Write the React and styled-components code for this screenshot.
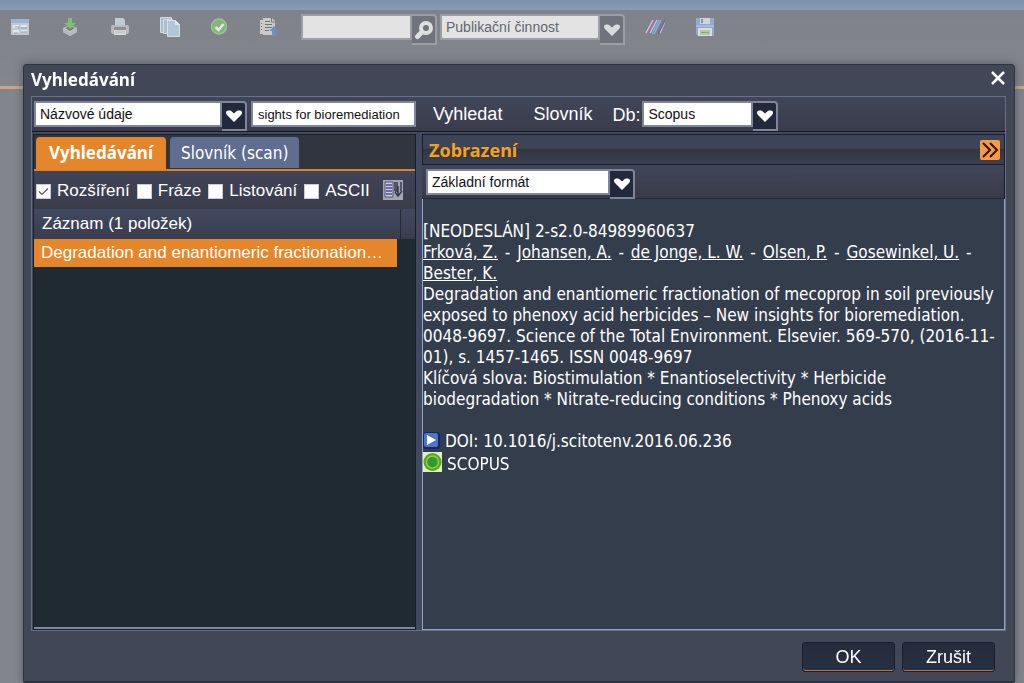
import {useState} from 'react'
import styled, {createGlobalStyle} from 'styled-components'

const GlobalStyle = createGlobalStyle`
  :root {
    --arial: "Liberation Sans", Arial, sans-serif;
    --tahoma: "DejaVu Sans Condensed", Tahoma, "Noto Sans", sans-serif;
    --bold: "Noto Sans", Tahoma, sans-serif;
    --fs-xs: 13px;
    --fs-sm: 14px;
    --fs-md: 17px;
    --fs-lg: 18px;
    --orange: #e5862a;
  }

  * {
    box-sizing: border-box;
  }

  body {
    margin: 0;
    overflow: hidden;
    background: #82868c;
    font-family: var(--arial);
    font-size: var(--fs-md);
    color: #fff;
  }

  button, input, select {
    font-family: inherit;
  }
`

const Page = styled.div`
  display: flex;
  flex-direction: column;
  min-height: 100vh;
`

const TopStrip = styled.div`
  height: 10px;
  background: linear-gradient(#7e90ab, #8a9bb3);
`

const MainToolbar = styled.header`
  display: flex;
  align-items: flex-start;
  height: 79px;
  padding: 4px 10px 0;
  background: linear-gradient(#80828b, #83868b);
  border-bottom: 3px solid #cfa47f;
`

const IconGroup = styled.div`
  display: flex;
  gap: 30px;
  padding-top: 3px;
  margin-right: ${p => p.$space || 0};
`

const IconButton = styled.button`
  width: 20px;
  height: 20px;
  padding: 0;
  border: 0;
  background: none;
  cursor: pointer;

  svg {
    display: block;
    width: 20px;
    height: 20px;
  }
`

const Combo = styled.div`
  position: relative;
  display: flex;
  align-items: flex-start;
  width: ${p => p.$width};
  margin-right: ${p => p.$space || 0};
`

const Select = styled.select`
  appearance: none;
  flex: 1;
  min-width: 0;
  height: 26px;
  margin: 0;
  padding: 0 4px;
  border: 2px solid ${p => p.$dim ? '#9c9ea5' : '#80859a'};
  border-radius: 0;
  background: ${p => p.$dim ? '#e3e3e3' : '#fff'};
  color: ${p => p.$dim ? '#63666b' : '#111'};
  font-size: var(--fs-sm);
`

const TextInput = styled.input`
  flex: 1;
  min-width: 0;
  height: 26px;
  margin: 0;
  padding: 0 5px;
  border: 2px solid ${p => p.$dim ? '#9c9ea5' : '#80859a'};
  border-radius: 0;
  background: ${p => p.$dim ? '#e3e3e3' : '#fff'};
  color: #111;
  font-size: var(--fs-xs);
`

const ArrowBox = styled.span`
  display: flex;
  align-items: center;
  justify-content: center;
  width: 25px;
  height: ${p => p.$height || '30px'};
  padding: 0;
  border: 2px solid ${p => p.$dim ? '#9c9ea5' : '#80859a'};
  border-left: 0;
  border-radius: 0 4px 0 0;
  background: ${p => p.$dim ? '#70737c' : '#22293c'};
  color: ${p => p.$dim ? '#d9dadd' : '#fff'};
  pointer-events: none;

  svg {
    flex: none;
  }
`

const SearchButton = styled(ArrowBox).attrs({as: 'button', type: 'button'})`
  pointer-events: auto;
  cursor: pointer;
`

/* modal window */
const Overlay = styled.div`
  position: fixed;
  inset: 0;
  display: flex;
  padding: 64px 9px 0 23px;
`

const Dialog = styled.section`
  display: flex;
  flex-direction: column;
  flex: 1;
  min-width: 0;
  padding: 0 8px 0 7px;
  border: 1px solid #2c3444;
  border-bottom-width: 2px;
  border-radius: 4px 4px 2px 2px;
  background: #414757;
  box-shadow: 0 0 8px rgba(40, 44, 54, .5);
`

const TitleBar = styled.div`
  display: flex;
  justify-content: space-between;
  align-items: flex-start;
  height: 31px;
`

const Title = styled.h1`
  margin: 0;
  font-family: var(--bold);
  font-size: var(--fs-md);
  line-height: 30px;
`

const CloseButton = styled.button`
  width: 16px;
  height: 28px;
  padding: 0;
  border: 0;
  background: none;
  color: #fff;
  cursor: pointer;
`

const Frame = styled.div`
  display: flex;
  flex-direction: column;
  flex: 1;
  min-height: 0;
  border: 1px solid #687086;
`

const SearchBar = styled.form`
  display: flex;
  align-items: flex-start;
  height: 35px;
  padding: 4px 2px 0;
  background: linear-gradient(#404659, #3a3c4b);
  border-bottom: 1px solid #15181f;
`

const BarButton = styled.button`
  height: 26px;
  margin-left: ${p => p.$space};
  padding: 0;
  border: 0;
  background: none;
  color: #fff;
  font-size: var(--fs-lg);
  cursor: pointer;
`

const BarLabel = styled.label`
  margin: 0 2px 0 20px;
  font-size: var(--fs-lg);
  line-height: 28px;
`

const Panels = styled.div`
  display: grid;
  grid-template-columns: 383px 1fr;
  gap: 6px;
  flex: 1;
  min-height: 0;
  padding: 2px 0 0 1px;
  background: #414860;
`

const LeftPanel = styled.div`
  display: flex;
  flex-direction: column;
  min-width: 0;
  border: 1px solid #191e29;
  background: #202a33;
`

const Tabs = styled.div`
  display: flex;
  align-items: flex-start;
  gap: 4px;
  height: 36px;
  padding: 2px 2px 0;
  background: #31353f;
  border-bottom: 2px solid #dc8127;
`

const Tab = styled.button`
  height: ${p => p.$active ? '33px' : '31px'};
  padding: ${p => p.$active ? '0 13px 3px' : '0 11px'};
  border: 0;
  border-radius: 4px 4px 0 0;
  background: ${p => p.$active ? 'var(--orange)' : '#5f6d8f'};
  color: #fff;
  font-family: ${p => p.$active ? 'var(--bold)' : 'var(--tahoma)'};
  font-size: var(--fs-md);
  font-weight: ${p => p.$active ? 'bold' : 'normal'};
  cursor: pointer;
`

const Options = styled.div`
  display: flex;
  align-items: center;
  gap: 7px;
  height: 38px;
  padding: 2px 2px 0;
  background: linear-gradient(#404459, #3a3c4a);
`

const Option = styled.label`
  display: flex;
  align-items: center;
  gap: 6px;
`

const Checkbox = styled.input.attrs({type: 'checkbox'})`
  appearance: none;
  width: 15px;
  height: 15px;
  margin: 1px 0 0;
  border: 1px solid #c9cbd2;
  background: #fff;

  &:checked {
    background: #fff url("data:image/svg+xml,%3Csvg xmlns='http://www.w3.org/2000/svg' viewBox='0 0 13 13'%3E%3Cpath d='M2 6.5 5 9.5 11 3.5' fill='none' stroke='%23555' stroke-width='1.2'/%3E%3C/svg%3E");
  }
`

const SortButton = styled(IconButton)`
  width: 21px;
  height: 20px;
  margin: 0 9px 2px auto;
`

const Results = styled.table`
  width: 100%;
  table-layout: fixed;
  border-collapse: collapse;

  th {
    height: 30px;
    padding: 0 8px;
    background: linear-gradient(#414a62, #3a3c4d);
    border-right: 1px solid #252a38;
    font-weight: normal;
    text-align: left;
  }

  th + th {
    width: 15px;
    padding: 0;
    border-right: 0;
  }

  td {
    padding: 0;
  }
`

const Record = styled.button`
  display: block;
  width: 363px;
  max-width: 100%;
  height: 28px;
  padding: 0 6px 0 7px;
  border: 0;
  background: var(--orange);
  color: #fff;
  font-size: var(--fs-md);
  text-align: left;
  white-space: nowrap;
  overflow: hidden;
  text-overflow: ellipsis;
`

const ListEnd = styled.div`
  margin-top: auto;
  border-bottom: 2px solid #8088a0;
`

const RightPanel = styled.div`
  display: flex;
  flex-direction: column;
  min-width: 0;
  min-height: 0;
`

const ViewHeader = styled.div`
  display: flex;
  align-items: center;
  justify-content: space-between;
  height: 31px;
  padding: 0 4px 0 6px;
  border: 1px solid #191e29;
  background: linear-gradient(#3d4458 0 45%, #32363f 50%, #3b4155);
`

const ViewTitle = styled.h2`
  margin: 0;
  color: #f4a11c;
  font-family: var(--bold);
  font-size: var(--fs-lg);
  line-height: 28px;
`

const ExpandButton = styled(IconButton)`
  border-radius: 2px;
  background: #f79a45;
`

const FormatBar = styled.div`
  height: 34px;
  padding: 4px 4px 0;
  border-right: 1px solid #191e29;
  border-bottom: 1px solid #22283a;
  background: linear-gradient(#404659, #3a3a49);
`

const Detail = styled.article`
  flex: 1;
  min-height: 0;
  padding: 22px 1px 0 0;
  border: 1px solid #93a5cb;
  border-top: 0;
  background: #343d4c;
  font-family: var(--tahoma);
  font-size: var(--fs-md);
  line-height: 21px;

  p {
    margin: 0;
  }

  a {
    color: #fff;
  }
`

const Dash = styled.span`
  padding: 0 2px;
`

const Source = styled.p`
  display: flex;
  align-items: flex-start;
  gap: 5px;
  line-height: ${p => p.$line};

  svg {
    flex: none;
  }
`

const Footer = styled.footer`
  display: flex;
  justify-content: flex-end;
  gap: 7px;
  padding: 11px 11px 9px;
`

const FooterButton = styled.button`
  width: 93px;
  height: 30px;
  padding: 0;
  border: 1px solid #191f2c;
  border-radius: 3px;
  background: linear-gradient(#242c3c, #272f42);
  box-shadow: inset 0 -1px 0 #b87840;
  color: #fff;
  font-size: var(--fs-lg);
  cursor: pointer;
`

const Arrow = () => (
  <svg width="18" height="14" viewBox="0 0 18 14" aria-hidden="true">
      <path d="M1 3.500Q1 1.500 3.500 1.500H5Q6 1.500 9 4.500Q12 1.500 13 1.500H14.500Q17 1.500 17 3.500Q17 5 16 6L9 13 2 6Q1 5 1 3.500Z" fill="currentColor"/>
  </svg>
)

const authors = ['Frková, Z.', 'Johansen, A.', 'de Jonge, L. W.', 'Olsen, P.', 'Gosewinkel, U.', 'Bester, K.']

const Dropdown = ({label, id, options, width, space, dim, height}) => (
  <Combo $width={width} $space={space}>
      <Select id={id} aria-label={label} $dim={dim}>
          {options.map(o => <option key={o}>{o}</option>)}
      </Select>
      <ArrowBox $dim={dim} $height={height}><Arrow/></ArrowBox>
  </Combo>
)

const App = () => {
    const [tab, setTab] = useState('search')

    return (
      <>
          <GlobalStyle/>
          <Page>
              <TopStrip/>
              <MainToolbar>
                  <IconGroup $space="21px">
                      <IconButton aria-label="Formulář">
                          <svg viewBox="0 0 20 20">
                              <rect x="1" y="2" width="18" height="16" rx="1" fill="#c3c9d3"/>
                              <rect x="1" y="2" width="18" height="4" fill="#9fb3d4"/>
                              <path d="M3 8h6v3H3ZM11 8h6v2h-6ZM3 13h6v3H3ZM11 13h6v2h-6Z" fill="#e3e6ea"/>
                              <path d="M5 10h4v2M11 11h6M4 16h4M11 15h6" fill="none" stroke="#98a1b0"/>
                          </svg>
                      </IconButton>
                      <IconButton aria-label="Uložit záznam">
                          <svg viewBox="0 0 20 20">
                              <path d="M3 11 10 8l7 3v4l-7 4-7-4Z" fill="#c9c9c9"/>
                              <path d="m3 11 7 4 7-4v4l-7 4-7-4Z" fill="#b8b9bb"/>
                              <path d="m5 11 5 3 5-3-5-2Z" fill="#777b80"/>
                              <path d="M8 1h4v5h4l-6 6-6-6h4Z" fill="#7cc071"/>
                          </svg>
                      </IconButton>
                      <IconButton aria-label="Tisk">
                          <svg viewBox="0 0 20 20">
                              <path d="M5 1h8l2 2v6H5Z" fill="#bfccd8"/>
                              <rect x="1" y="8" width="18" height="9" rx="2" fill="#b9babd"/>
                              <path d="M4 10h12v3H4Z" fill="#8e9095"/>
                              <path d="M4 13h12v5H4Z" fill="#d5d6d8"/>
                              <path d="M5 15h10" stroke="#b2b4b8"/>
                          </svg>
                      </IconButton>
                      <IconButton aria-label="Kopírovat">
                          <svg viewBox="0 0 20 20">
                              <path d="M.5.5h11v15H.5Z" fill="#a8bfce" stroke="#d4d9dd"/>
                              <path d="M3.500 2.500h9v14h-9Z" fill="#a8bfce" stroke="#d4d9dd"/>
                              <path d="M7.500 3.500h8l4 4v12h-12Z" fill="#b1c6d6" stroke="#dadee1"/>
                              <path d="M15.500 3.500v4h4" fill="#e4e8eb" stroke="#e4e8eb"/>
                          </svg>
                      </IconButton>
                      <IconButton aria-label="Potvrdit">
                          <svg viewBox="0 0 20 20">
                              <circle cx="9" cy="9.500" r="7.500" fill="#85b37e" stroke="#9cc495" strokeWidth="1.500"/>
                              <path d="m5.500 10 3 3 5-6" fill="none" stroke="#e1eddf" strokeWidth="2.500"/>
                          </svg>
                      </IconButton>
                      <IconButton aria-label="Export">
                          <svg viewBox="0 0 20 20">
                              <path d="M0 3h4v14H0ZM3 1h9l3 3v14H3Z" fill="#cbc9c7"/>
                              <path d="M5 4.500h5M5 7.500h7M5 10.500h7M5 13.500h4M1 6.500h1M1 9.500h1M1 12.500h1" stroke="#77777a"/>
                              <path d="M11.500 1v4h3.500" fill="none" stroke="#77777a"/>
                              <path d="m14 9 4.500 5H16v5h-4v-5H9.500Z" fill="#6c8fc4"/>
                          </svg>
                      </IconButton>
                  </IconGroup>
                  <Combo $width="136px" $space="3px">
                      <TextInput $dim aria-label="Rychlé hledání"/>
                      <SearchButton $dim $height="31px" aria-label="Hledat">
                          <svg width="20" height="20" viewBox="0 0 20 20">
                              <circle cx="12" cy="8" r="5" fill="none" stroke="#dedfe1" strokeWidth="4"/>
                              <path d="m8 12-4.500 4.500" stroke="#dedfe1" strokeWidth="5" strokeLinecap="round"/>
                          </svg>
                      </SearchButton>
                  </Combo>
                  <Dropdown dim label="Databáze" options={['Publikační činnost']} width="185px" space="20px" height="31px"/>
                  <IconGroup>
                      <IconButton aria-label="Čárové kódy">
                          <svg viewBox="0 0 20 20" fill="none" strokeWidth="1.500">
                              <path d="m1 16 7-13M5 16l7-13M15 16l5-12" stroke="#c5c1e0"/>
                              <path d="m3 16 7-13M11 17l7-14" stroke="#a66d8e"/>
                              <path d="m7 17 7-14M9 17l7-14" stroke="#79b4d4"/>
                              <path d="m13 17 7-14" stroke="#636ba0"/>
                          </svg>
                      </IconButton>
                      <IconButton aria-label="Uložit">
                          <svg viewBox="0 0 20 20">
                              <path d="M1 1h18v18H3l-2-2Z" fill="#91a9d3"/>
                              <path d="M5 1h10v6H5Z" fill="#ced6dd"/>
                              <path d="M6 2h2v4H6Z" fill="#8792a8"/>
                              <path d="M1 9h18" stroke="#b9c7e2"/>
                              <path d="M3 11h14v8H3Z" fill="#d8dfd5"/>
                              <path d="M5 13h10v5H5Z" fill="#b4c9ab"/>
                              <path d="M6 15.500h8" stroke="#8ba57f"/>
                          </svg>
                      </IconButton>
                  </IconGroup>
              </MainToolbar>
          </Page>

          <Overlay>
              <Dialog role="dialog" aria-labelledby="dialog-title">
                  <TitleBar>
                      <Title id="dialog-title">Vyhledávání</Title>
                      <CloseButton aria-label="Zavřít">
                          <svg width="16" height="16" viewBox="0 0 16 16">
                              <path d="m2 2 12 12M14 2 2 14" stroke="currentColor" strokeWidth="2.500"/>
                          </svg>
                      </CloseButton>
                  </TitleBar>
                  <Frame>
                      <SearchBar onSubmit={e => e.preventDefault()}>
                          <Dropdown label="Pole" options={['Názvové údaje']} width="213px" space="4px"/>
                          <Combo $width="165px">
                              <TextInput aria-label="Hledaný výraz" defaultValue="sights for bioremediation"/>
                          </Combo>
                          <BarButton type="submit" $space="17px">Vyhledat</BarButton>
                          <BarButton type="button" $space="31px">Slovník</BarButton>
                          <BarLabel htmlFor="db">Db:</BarLabel>
                          <Dropdown id="db" options={['Scopus']} width="136px"/>
                      </SearchBar>
                      <Panels>
                          <LeftPanel>
                              <Tabs role="tablist">
                                  <Tab role="tab" aria-selected={tab === 'search'} $active={tab === 'search'} onClick={() => setTab('search')}>Vyhledávání</Tab>
                                  <Tab role="tab" aria-selected={tab === 'scan'} $active={tab === 'scan'} onClick={() => setTab('scan')}>Slovník (scan)</Tab>
                              </Tabs>
                              <Options>
                                  <Option><Checkbox defaultChecked/>Rozšíření</Option>
                                  <Option><Checkbox/>Fráze</Option>
                                  <Option><Checkbox/>Listování</Option>
                                  <Option><Checkbox/>ASCII</Option>
                                  <SortButton aria-label="Třídění">
                                      <svg viewBox="0 0 20 20">
                                          <rect width="20" height="20" fill="#a3a6b4"/>
                                          <path d="M2 2h8v15H2Z" fill="#c9cbe2" stroke="#4f5474"/>
                                          <path d="M3 5h6M3 8h6M3 11h6M3 14h6" stroke="#4f4f8c" strokeWidth="1.500"/>
                                          <path d="M12 2v9M18 2v9M12 11h2v-9M15 6v10M12 12l3 4 4-5" fill="none" stroke="#363b4e" strokeWidth="1.500"/>
                                      </svg>
                                  </SortButton>
                              </Options>
                              <Results>
                                  <thead>
                                      <tr><th>Záznam (1 položek)</th><th aria-hidden="true"/></tr>
                                  </thead>
                                  <tbody>
                                      <tr>
                                          <td colSpan="2"><Record>Degradation and enantiomeric fractionation…</Record></td>
                                      </tr>
                                  </tbody>
                              </Results>
                              <ListEnd/>
                          </LeftPanel>
                          <RightPanel>
                              <ViewHeader>
                                  <ViewTitle>Zobrazení</ViewTitle>
                                  <ExpandButton aria-label="Rozbalit">
                                      <svg viewBox="0 0 20 20" fill="none" stroke="#2c150a" strokeWidth="2">
                                          <path d="m3 3 7 7-7 7M10 3l7 7-7 7"/>
                                      </svg>
                                  </ExpandButton>
                              </ViewHeader>
                              <FormatBar>
                                  <Dropdown label="Formát" options={['Základní formát']} width="209px"/>
                              </FormatBar>
                              <Detail>
                                  <p>[NEODESLÁN] 2-s2.0-84989960637</p>
                                  <p>
                                      {authors.map((a, i) => (
                                        <span key={a}>{i > 0 && <Dash> - </Dash>}<a href="#autor">{a}</a></span>
                                      ))}
                                  </p>
                                  <p>
                                      Degradation and enantiomeric fractionation of mecoprop in soil previously
                                      exposed to phenoxy acid herbicides – New insights for bioremediation.
                                      0048-9697. Science of the Total Environment. Elsevier. 569-570, (2016-11-01), s. 1457-1465. ISSN 0048-9697
                                  </p>
                                  <p>
                                      Klíčová slova: Biostimulation * Enantioselectivity * Herbicide
                                      biodegradation * Nitrate-reducing conditions * Phenoxy acids
                                  </p>
                                  <br/>
                                  <Source $line="21px">
                                      <svg width="17" height="18" viewBox="0 0 17 18">
                                          <rect y="1" width="17" height="17" rx="3" fill="#17275e"/>
                                          <rect x="1" y="2" width="14" height="14" rx="2" fill="#4a75c9"/>
                                          <path d="m4 4 9 5-9 5Z" fill="#fff"/>
                                      </svg>
                                      DOI: 10.1016/j.scitotenv.2016.06.236
                                  </Source>
                                  <Source $line="25px">
                                      <svg width="19" height="20" viewBox="0 0 19 20">
                                          <rect width="19" height="20" fill="#dfeecb"/>
                                          <circle cx="9.500" cy="10" r="9" fill="#58a51f"/>
                                          <circle cx="9.500" cy="10" r="6" fill="#2e9a36" stroke="#9bd034" strokeWidth="1.500"/>
                                      </svg>
                                      SCOPUS
                                  </Source>
                              </Detail>
                          </RightPanel>
                      </Panels>
                  </Frame>
                  <Footer>
                      <FooterButton>OK</FooterButton>
                      <FooterButton>Zrušit</FooterButton>
                  </Footer>
              </Dialog>
          </Overlay>
      </>
    )
}

export default App
